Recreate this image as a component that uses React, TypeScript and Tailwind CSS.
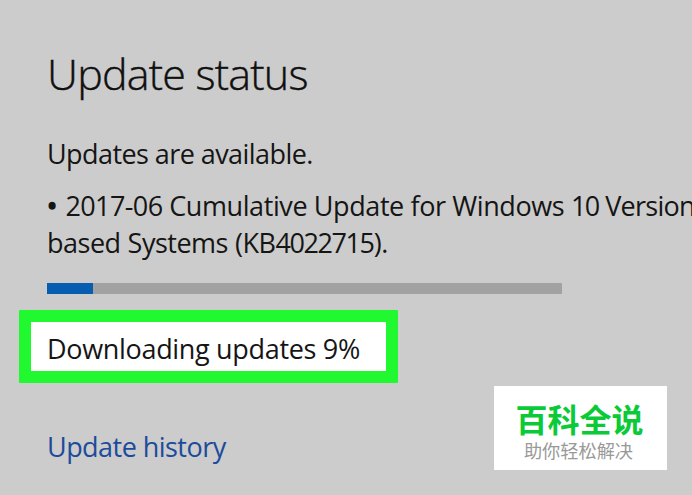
const PROGRESS = 9;

function ProgressBar({ value }: { value: number }) {
  return (
    <div className="mt-[22px] ml-[47px] h-[11px] w-[515px] bg-[#a2a2a2]">
      <div className="h-full bg-[#075eb0]" style={{ width: `${value}%` }} />
    </div>
  );
}

function SiteBadge() {
  return (
    <div className="absolute top-[386px] left-[494px] flex h-[84px] w-[173px] flex-col items-center bg-white font-['Noto_Sans_CJK_SC',sans-serif] whitespace-nowrap">
      <p className="mt-[15px] mr-[2px] text-[32px] leading-[34px] font-bold text-[#0acb37]">百科全说</p>
      <p className="mt-[3px] mr-[4px] text-[18.2px] leading-[24px] text-[#999999]">助你轻松解决</p>
    </div>
  );
}

export default function App() {
  return (
    <main className="relative h-[495px] w-[692px] overflow-hidden bg-[#cccccc] pt-[46px] font-['Open_Sans','Noto_Sans',sans-serif] text-[27px] leading-[37px] whitespace-nowrap text-[#151515]">
      <h1 className="ml-[47px] text-[43px] leading-[56px] font-light tracking-[-0.8px] text-[#101010] [-webkit-text-stroke:0.4px_#101010]">
        Update status
      </h1>
      <p className="mt-[33px] ml-[47px] tracking-[-0.57px]">Updates are available.</p>
      <div className="mt-[15px] ml-[47px]">
        <p className="tracking-[-0.4px]">
          <span className="mr-[2px] [-webkit-text-stroke:1.5px_#151515]">•</span>{' '}
          <span className="tracking-[-0.6px]">2017-06</span> Cumulative Update for Windows{' '}
          <span className="tracking-[-1.6px]">10</span>{' '}
          <span className="tracking-[-0.75px]">Version</span>
        </p>
        <p className="tracking-[-0.5px] [word-spacing:0.5px]">
          based Systems (KB<span className="tracking-[-1.4px]">4022715</span>).
        </p>
      </div>
      <ProgressBar value={PROGRESS} />
      <div className="mt-4 ml-[19px] h-[73px] w-[379px] rounded-[1px] border-12 border-[#20f82f] bg-white pt-2 pl-4 tracking-[-0.32px]">
        Downloading updates 9%
      </div>
      <a className="mt-[45px] ml-[47px] block tracking-[-0.54px] text-[#1c4b9b]">Update history</a>
      <SiteBadge />
    </main>
  );
}
